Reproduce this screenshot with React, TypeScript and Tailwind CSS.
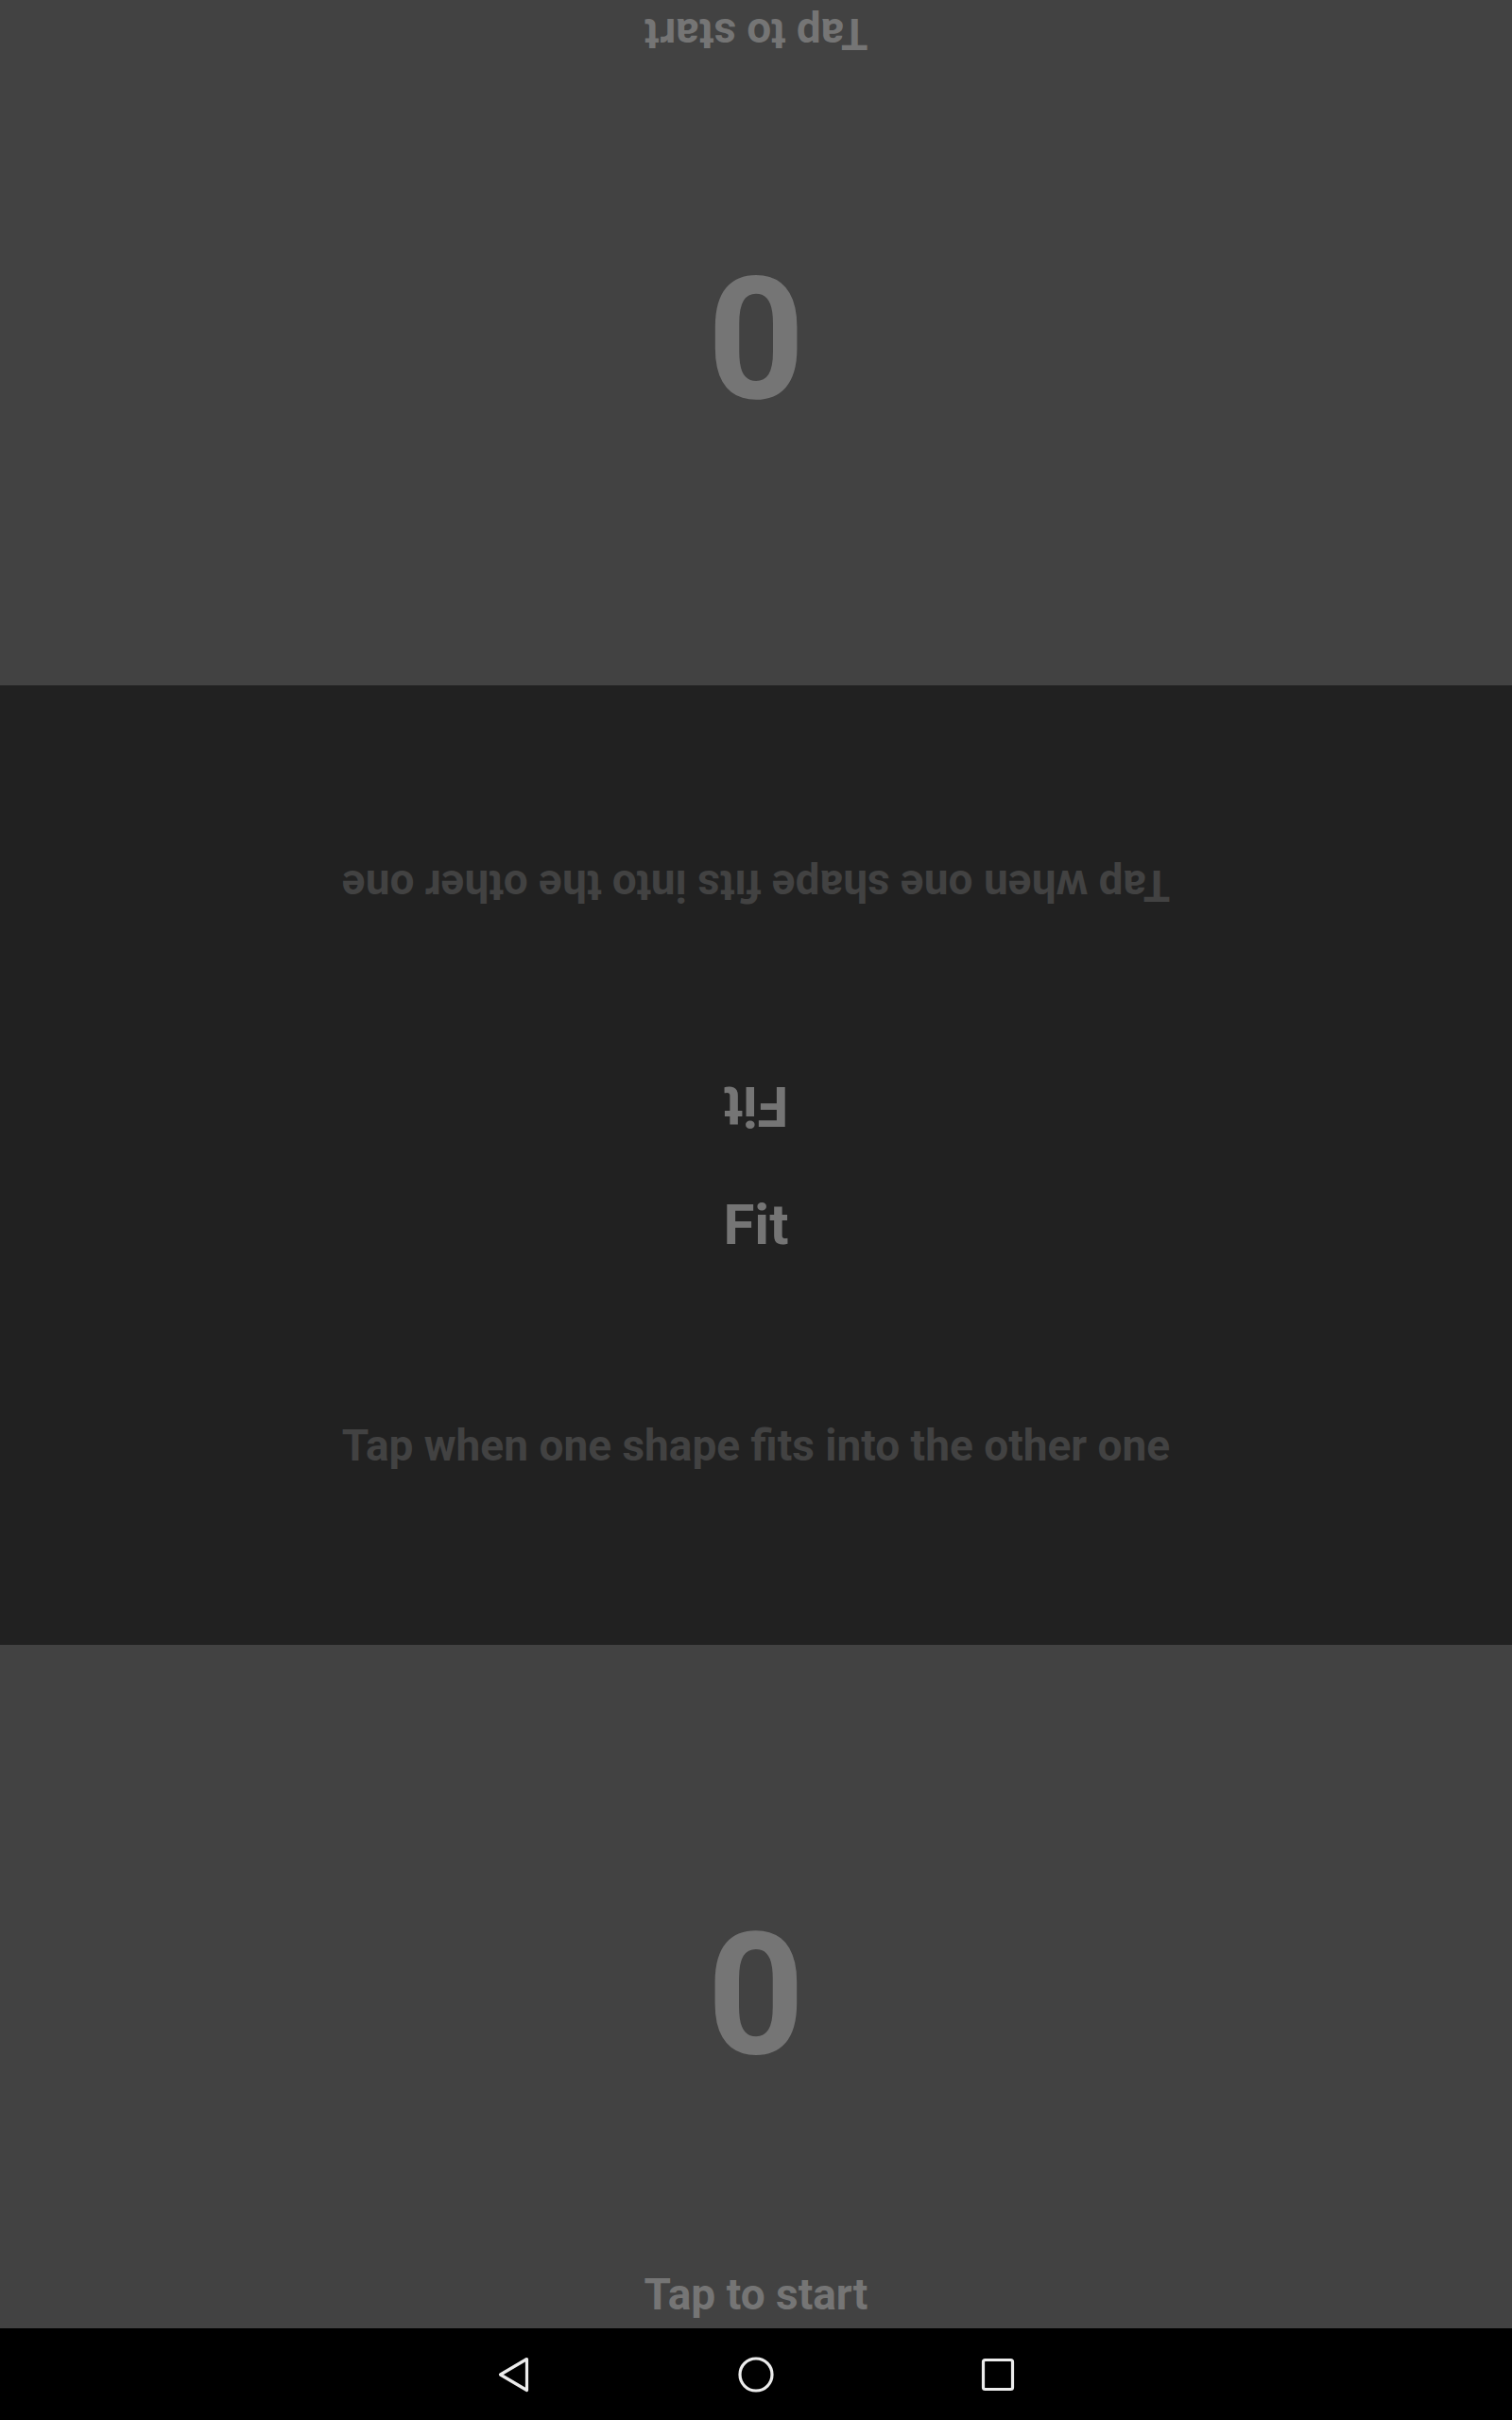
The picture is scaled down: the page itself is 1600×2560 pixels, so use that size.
export default function App() {
  return (
    <div className="w-[1600px] h-[2560px] flex flex-col font-[Roboto,sans-serif] font-bold overflow-hidden">
      {/* Player 2 (flipped) */}
      <PlayerPanel className="h-[725px] rotate-180" />

      {/* Center area */}
      <div className="h-[1015px] bg-[#212121] flex flex-col">
        <CenterHalf className="flex-1 rotate-180" />
        <CenterHalf className="flex-1" />
      </div>

      {/* Player 1 */}
      <PlayerPanel className="h-[723px]" />

      {/* Android nav bar */}
      <div className="h-[97px] bg-black flex items-center justify-center">
        <div className="w-[256px] flex justify-center">
          <svg width="40" height="40" viewBox="0 0 40 40" fill="none">
            <path d="M33.5 3.5 L5.5 20 L33.5 36.5 Z" stroke="#ececec" strokeWidth="3.2" strokeLinejoin="round" />
          </svg>
        </div>
        <div className="w-[256px] flex justify-center">
          <svg width="40" height="40" viewBox="0 0 40 40" fill="none">
            <circle cx="20" cy="20" r="17" stroke="#ececec" strokeWidth="3.2" />
          </svg>
        </div>
        <div className="w-[256px] flex justify-center">
          <svg width="40" height="40" viewBox="0 0 40 40" fill="none">
            <rect x="4.5" y="4.5" width="31" height="31" rx="2" stroke="#ececec" strokeWidth="3.2" />
          </svg>
        </div>
      </div>
    </div>
  );
}

function PlayerPanel({ className }: { className: string }) {
  return (
    <div className={`bg-[#424242] flex flex-col items-center ${className}`}>
      <div className="pt-[281px] text-[180px] leading-none text-[#757575]">0</div>
      <div className="mt-auto pb-[13px] text-[46px] leading-none text-[#757575]">Tap to start</div>
    </div>
  );
}

function CenterHalf({ className }: { className: string }) {
  return (
    <div className={`flex flex-col items-center pt-[33px] ${className}`}>
      <div className="text-[60px] leading-none text-[#757575]">Fit</div>
      <div className="mt-[180px] text-[46px] leading-none text-[#424242]">
        Tap when one shape fits into the other one
      </div>
    </div>
  );
}
